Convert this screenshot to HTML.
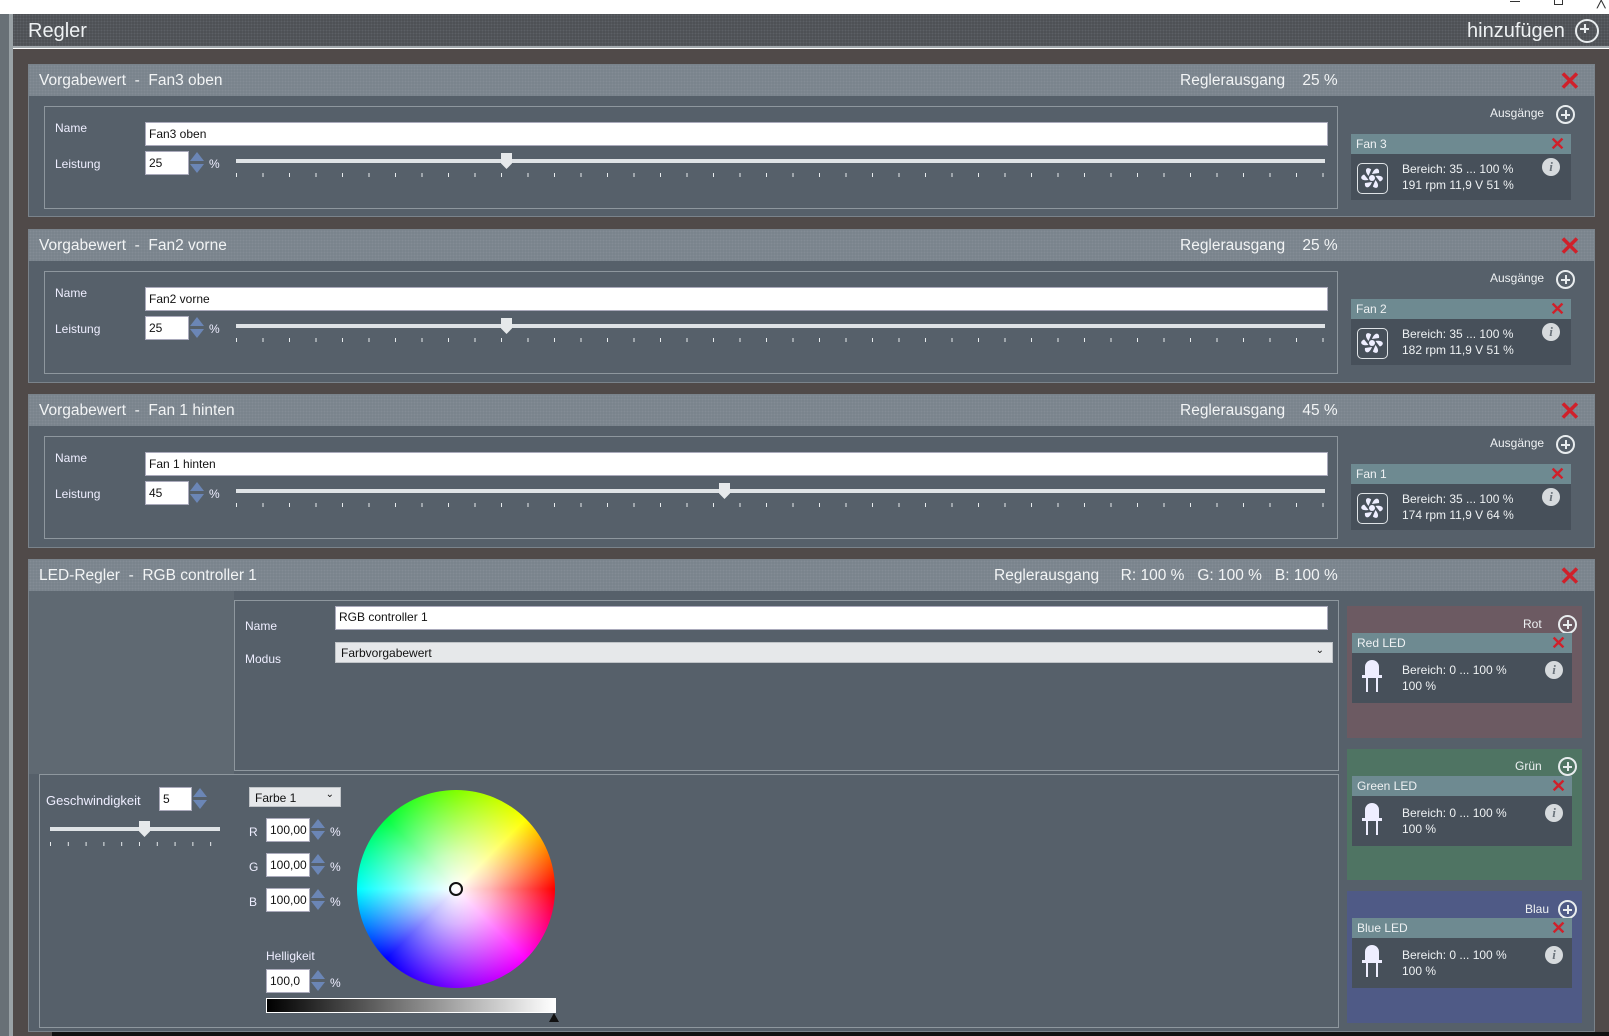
<!DOCTYPE html>
<html><head><meta charset="utf-8"><style>
*{box-sizing:border-box;margin:0;padding:0}
body{width:1609px;height:1036px;overflow:hidden;background:#fff;font-family:"Liberation Sans",sans-serif;position:relative;color:#eef1f3}
div,span{position:absolute}
.bg{left:13px;top:49px;width:1596px;height:987px;background:#504a49}
.left{left:0;top:14px;width:9px;height:1022px;background:#687076}
.left2{left:9px;top:14px;width:4px;height:1022px;background:#9aa2a6}
.hdr{left:13px;top:14px;width:1596px;height:34px;background:#4b4e52;background-image:radial-gradient(#5c6065 1px,transparent 1.2px);background-size:3px 3px;border-bottom:2px solid #a5abaf}
.panel{left:28px;width:1567px;background:#56606a;border:1px solid #7a838b}
.tbar{left:0;top:0;width:100%;height:31px;background:#78828b;background-image:radial-gradient(#838c95 1px,transparent 1.2px);background-size:3px 3px}
.tt{top:7px;font-size:15.5px;color:#f2f4f5;white-space:pre}
.box{border:1px solid #8e979e}
.lbl{font-size:12px;color:#eef}
.inp{background:#fff;color:#111;font-size:12px;padding:4px 3px;border:1px solid #aab}
.spin{width:15px;height:24px}
.spin:before{content:"";position:absolute;left:1px;top:1px;border-left:7px solid transparent;border-right:7px solid transparent;border-bottom:9px solid #6b86b6}
.spin:after{content:"";position:absolute;left:1px;top:13px;border-left:7px solid transparent;border-right:7px solid transparent;border-top:9px solid #6b86b6}
.track{height:4px;background:#dfe3e6}
.ticks{height:4px;background-image:linear-gradient(90deg,#e8ecee 1px,transparent 1px);background-size:26.5px 4px}
.thumb{width:11px;height:16px;background:#e6e9eb;clip-path:polygon(0 0,100% 0,100% 65%,50% 100%,0 65%)}
.card{background:#47505a}
.ch{left:0;top:0;width:100%;height:20px;background:#6e8a91;font-size:12px;padding:3px 5px}
.x{font-size:26px;color:#d0202a;font-weight:bold;line-height:1}
.xs{font-size:18px;color:#d0202a;font-weight:bold;line-height:1}
.info{width:18px;height:18px;border-radius:50%;background:#d6dadd;color:#6a737b;font:italic bold 13px "Liberation Serif",serif;text-align:center;line-height:18px}
.plus{width:19px;height:19px;border:2px solid #e8ecee;border-radius:50%}
.plus:before{content:"";position:absolute;left:3px;top:6.5px;width:9px;height:2px;background:#e8ecee}
.plus:after{content:"";position:absolute;left:6.5px;top:3px;width:2px;height:9px;background:#e8ecee}
.small{font-size:12px;line-height:16px}
</style></head><body>
<div class="bg"></div>
<div class="left"></div><div class="left2"></div>
<div class="hdr"><span style="left:15px;top:6px;font-size:20px">Regler</span>
<span style="left:1454px;top:6px;font-size:20px">hinzufügen</span>
<span class="plus" style="left:1562px;top:5px;width:24px;height:24px;border-width:2.5px"></span></div>
<div style="left:1510px;top:1px;width:10px;height:1px;background:#333"></div>
<div style="left:1554px;top:0;width:9px;height:5px;border:1px solid #333;border-top:none"></div>
<span style="left:1597px;top:-8px;font-size:14px;color:#333">╳</span>

<div class="panel" style="top:64px;height:153px">
<div class="tbar"></div>
<span class="tt" style="left:10px">Vorgabewert  -  Fan3 oben</span>
<span class="tt" style="left:1151px">Reglerausgang    25 %</span>
<span class="x" style="left:1530px;top:3px">✕</span>
<div class="box" style="left:15px;top:41px;width:1294px;height:103px">
<span class="lbl" style="left:10px;top:14px">Name</span>
<div class="inp" style="left:100px;top:15px;width:1183px;height:24px">Fan3 oben</div>
<span class="lbl" style="left:10px;top:50px">Leistung</span>
<div class="inp" style="left:100px;top:44px;width:44px;height:24px">25</div>
<div class="spin" style="left:144px;top:44px"></div>
<span class="lbl" style="left:164px;top:50px">%</span>
<div class="track" style="left:191px;top:52px;width:1089px"></div>
<div class="ticks" style="left:191px;top:66px;width:1090px"></div>
<div class="thumb" style="left:456px;top:46px"></div>
</div>
<span class="small" style="left:1461px;top:40px">Ausgänge</span><span class="plus" style="left:1527px;top:40px"></span>
<div class="card" style="left:1322px;top:69px;width:220px;height:66px"><div class="ch">Fan 3</div><span class="xs" style="left:199px;top:1px">✕</span>
<div style="left:6px;top:29px;width:31px;height:31px;border:1.5px solid #dfe3e6;border-radius:5px"><svg width="28" height="28" viewBox="0 0 28 28" style="position:absolute;left:0;top:0"><g fill="#eef" transform="translate(14 14)"><circle r="3"/><path id="b" d="M0-4C3-12 8-10 7-5Z"/><use href="#b" transform="rotate(60)"/><use href="#b" transform="rotate(120)"/><use href="#b" transform="rotate(180)"/><use href="#b" transform="rotate(240)"/><use href="#b" transform="rotate(300)"/></g></svg></div>
<span class="small" style="left:51px;top:27px">Bereich:  35 ... 100  %<br>191 rpm  11,9 V  51 %</span>
<div class="info" style="left:191px;top:24px">i</div></div>
</div>

<div class="panel" style="top:229px;height:154px">
<div class="tbar"></div>
<span class="tt" style="left:10px">Vorgabewert  -  Fan2 vorne</span>
<span class="tt" style="left:1151px">Reglerausgang    25 %</span>
<span class="x" style="left:1530px;top:3px">✕</span>
<div class="box" style="left:15px;top:41px;width:1294px;height:103px">
<span class="lbl" style="left:10px;top:14px">Name</span>
<div class="inp" style="left:100px;top:15px;width:1183px;height:24px">Fan2 vorne</div>
<span class="lbl" style="left:10px;top:50px">Leistung</span>
<div class="inp" style="left:100px;top:44px;width:44px;height:24px">25</div>
<div class="spin" style="left:144px;top:44px"></div>
<span class="lbl" style="left:164px;top:50px">%</span>
<div class="track" style="left:191px;top:52px;width:1089px"></div>
<div class="ticks" style="left:191px;top:66px;width:1090px"></div>
<div class="thumb" style="left:456px;top:46px"></div>
</div>
<span class="small" style="left:1461px;top:40px">Ausgänge</span><span class="plus" style="left:1527px;top:40px"></span>
<div class="card" style="left:1322px;top:69px;width:220px;height:66px"><div class="ch">Fan 2</div><span class="xs" style="left:199px;top:1px">✕</span>
<div style="left:6px;top:29px;width:31px;height:31px;border:1.5px solid #dfe3e6;border-radius:5px"><svg width="28" height="28" viewBox="0 0 28 28" style="position:absolute;left:0;top:0"><g fill="#eef" transform="translate(14 14)"><circle r="3"/><path id="c" d="M0-4C3-12 8-10 7-5Z"/><use href="#c" transform="rotate(60)"/><use href="#c" transform="rotate(120)"/><use href="#c" transform="rotate(180)"/><use href="#c" transform="rotate(240)"/><use href="#c" transform="rotate(300)"/></g></svg></div>
<span class="small" style="left:51px;top:27px">Bereich:  35 ... 100  %<br>182 rpm  11,9 V  51 %</span>
<div class="info" style="left:191px;top:24px">i</div></div>
</div>

<div class="panel" style="top:394px;height:154px">
<div class="tbar"></div>
<span class="tt" style="left:10px">Vorgabewert  -  Fan 1 hinten</span>
<span class="tt" style="left:1151px">Reglerausgang    45 %</span>
<span class="x" style="left:1530px;top:3px">✕</span>
<div class="box" style="left:15px;top:41px;width:1294px;height:103px">
<span class="lbl" style="left:10px;top:14px">Name</span>
<div class="inp" style="left:100px;top:15px;width:1183px;height:24px">Fan 1 hinten</div>
<span class="lbl" style="left:10px;top:50px">Leistung</span>
<div class="inp" style="left:100px;top:44px;width:44px;height:24px">45</div>
<div class="spin" style="left:144px;top:44px"></div>
<span class="lbl" style="left:164px;top:50px">%</span>
<div class="track" style="left:191px;top:52px;width:1089px"></div>
<div class="ticks" style="left:191px;top:66px;width:1090px"></div>
<div class="thumb" style="left:674px;top:46px"></div>
</div>
<span class="small" style="left:1461px;top:40px">Ausgänge</span><span class="plus" style="left:1527px;top:40px"></span>
<div class="card" style="left:1322px;top:69px;width:220px;height:66px"><div class="ch">Fan 1</div><span class="xs" style="left:199px;top:1px">✕</span>
<div style="left:6px;top:29px;width:31px;height:31px;border:1.5px solid #dfe3e6;border-radius:5px"><svg width="28" height="28" viewBox="0 0 28 28" style="position:absolute;left:0;top:0"><g fill="#eef" transform="translate(14 14)"><circle r="3"/><path id="d" d="M0-4C3-12 8-10 7-5Z"/><use href="#d" transform="rotate(60)"/><use href="#d" transform="rotate(120)"/><use href="#d" transform="rotate(180)"/><use href="#d" transform="rotate(240)"/><use href="#d" transform="rotate(300)"/></g></svg></div>
<span class="small" style="left:51px;top:27px">Bereich:  35 ... 100  %<br>174 rpm  11,9 V  64 %</span>
<div class="info" style="left:191px;top:24px">i</div></div>
</div>

<div class="panel" style="top:559px;height:473px">
<div class="tbar"></div>
<span class="tt" style="left:10px">LED-Regler  -  RGB controller 1</span>
<span class="tt" style="left:965px">Reglerausgang     R: 100 %   G: 100 %   B: 100 %</span>
<span class="x" style="left:1530px;top:3px">✕</span>
<div style="left:0;top:31px;width:205px;height:183px;background:#5f6972"></div>
<div class="box" style="left:205px;top:40px;width:1105px;height:171px">
<span class="lbl" style="left:10px;top:18px">Name</span>
<div class="inp" style="left:100px;top:5px;width:993px;height:24px;padding-top:3px">RGB controller 1</div>
<span class="lbl" style="left:10px;top:51px">Modus</span>
<div style="left:100px;top:41px;width:998px;height:21px;background:#e6e8ea;color:#111;font-size:12px;padding:3px 5px;border:1px solid #c0c4c8">Farbvorgabewert<span style="right:8px;top:2px;font-size:10px">⌄</span></div>
</div>
<div class="box" style="left:10px;top:214px;width:1300px;height:254px">
<span class="lbl" style="left:6px;top:18px;font-size:13px">Geschwindigkeit</span>
<div class="inp" style="left:119px;top:12px;width:33px;height:24px">5</div>
<div class="spin" style="left:152px;top:12px"></div>
<div class="track" style="left:10px;top:52px;width:170px"></div>
<div class="ticks" style="left:10px;top:67px;width:172px;background-size:17.8px 4px"></div>
<div class="thumb" style="left:99px;top:46px"></div>
<div style="left:209px;top:12px;width:92px;height:20px;background:#e6e8ea;color:#111;font-size:12px;padding:3px 5px;border:1px solid #c0c4c8">Farbe 1<span style="right:6px;top:1px;font-size:10px">⌄</span></div>
<span class="lbl" style="left:209px;top:50px">R</span><div class="inp" style="left:226px;top:43px;width:44px;height:24px">100,00</div><div class="spin" style="left:270px;top:43px"></div><span class="lbl" style="left:290px;top:50px">%</span>
<span class="lbl" style="left:209px;top:85px">G</span><div class="inp" style="left:226px;top:78px;width:44px;height:24px">100,00</div><div class="spin" style="left:270px;top:78px"></div><span class="lbl" style="left:290px;top:85px">%</span>
<span class="lbl" style="left:209px;top:120px">B</span><div class="inp" style="left:226px;top:113px;width:44px;height:24px">100,00</div><div class="spin" style="left:270px;top:113px"></div><span class="lbl" style="left:290px;top:120px">%</span>
<span class="lbl" style="left:226px;top:174px">Helligkeit</span>
<div class="inp" style="left:226px;top:194px;width:44px;height:24px">100,0</div><div class="spin" style="left:270px;top:194px"></div><span class="lbl" style="left:290px;top:201px">%</span>
<div style="left:226px;top:223px;width:290px;height:15px;border:1px solid #fff;background:linear-gradient(90deg,#000,#fff)"></div>
<div style="left:509px;top:238px;border-left:5px solid transparent;border-right:5px solid transparent;border-bottom:9px solid #111"></div>
<div style="left:317px;top:15px;width:198px;height:198px;border-radius:50%;background:radial-gradient(circle,#fff 0,rgba(255,255,255,.7) 25%,rgba(255,255,255,0) 70%),conic-gradient(#80ff00,#ffff00 45deg,#ff0000 90deg,#ff00ff 135deg,#8000ff 180deg,#0000ff 225deg,#00ffff 270deg,#00ff40 315deg,#80ff00)"></div>
<div style="left:409px;top:107px;width:14px;height:14px;border:2px solid #111;border-radius:50%"></div>
</div>
<div style="left:1318px;top:46px;width:235px;height:132px;background:#6c5a62"></div>
<span class="small" style="left:1494px;top:56px">Rot</span><span class="plus" style="left:1529px;top:55px"></span>
<div class="card" style="left:1323px;top:73px;width:220px;height:70px"><div class="ch">Red LED</div><span class="xs" style="left:199px;top:1px">✕</span>
<svg width="24" height="36" viewBox="0 0 24 36" style="position:absolute;left:8px;top:26px"><path d="M5 16V8a7 7 0 0 1 14 0v8Z" fill="#eef"/><rect x="2" y="16" width="20" height="3" fill="#eef"/><rect x="6" y="19" width="2" height="14" fill="#eef"/><rect x="16" y="19" width="2" height="14" fill="#eef"/></svg>
<span class="small" style="left:50px;top:29px">Bereich:  0 ... 100  %<br>100 %</span><div class="info" style="left:193px;top:28px">i</div></div>

<div style="left:1318px;top:189px;width:235px;height:131px;background:#4f7463"></div>
<span class="small" style="left:1486px;top:198px">Grün</span><span class="plus" style="left:1529px;top:197px"></span>
<div class="card" style="left:1323px;top:216px;width:220px;height:70px"><div class="ch">Green LED</div><span class="xs" style="left:199px;top:1px">✕</span>
<svg width="24" height="36" viewBox="0 0 24 36" style="position:absolute;left:8px;top:26px"><path d="M5 16V8a7 7 0 0 1 14 0v8Z" fill="#eef"/><rect x="2" y="16" width="20" height="3" fill="#eef"/><rect x="6" y="19" width="2" height="14" fill="#eef"/><rect x="16" y="19" width="2" height="14" fill="#eef"/></svg>
<span class="small" style="left:50px;top:29px">Bereich:  0 ... 100  %<br>100 %</span><div class="info" style="left:193px;top:28px">i</div></div>

<div style="left:1318px;top:331px;width:235px;height:132px;background:#4f5a86"></div>
<span class="small" style="left:1496px;top:341px">Blau</span><span class="plus" style="left:1529px;top:340px"></span>
<div class="card" style="left:1323px;top:358px;width:220px;height:70px"><div class="ch">Blue LED</div><span class="xs" style="left:199px;top:1px">✕</span>
<svg width="24" height="36" viewBox="0 0 24 36" style="position:absolute;left:8px;top:26px"><path d="M5 16V8a7 7 0 0 1 14 0v8Z" fill="#eef"/><rect x="2" y="16" width="20" height="3" fill="#eef"/><rect x="6" y="19" width="2" height="14" fill="#eef"/><rect x="16" y="19" width="2" height="14" fill="#eef"/></svg>
<span class="small" style="left:50px;top:29px">Bereich:  0 ... 100  %<br>100 %</span><div class="info" style="left:193px;top:28px">i</div></div>
</div>
<div style="left:52px;top:1032px;width:1557px;height:4px;background:#111"></div>
</body></html>
